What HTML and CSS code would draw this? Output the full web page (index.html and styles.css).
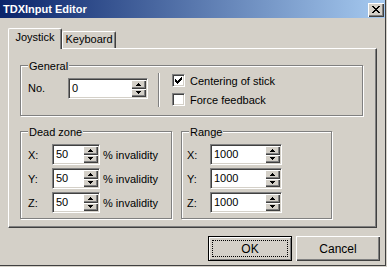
FILE: index.html
```html
<!DOCTYPE html>
<html lang="en">
<head>
    <meta charset="UTF-8">
    <title>TDXInput Editor</title>
    <link rel="stylesheet" href="styles.css">
</head>
<body>
    <div class="window">
        <div class="titlebar">
            <span class="title">TDXInput Editor</span>
            <span class="close">
                <svg width="8" height="7" viewBox="0 0 8 7" shape-rendering="crispEdges">
                    <path d="M0 0h2v1h-2zM6 0h2v1h-2zM1 1h2v1h-2zM5 1h2v1h-2zM2 2h4v1h-4zM3 3h2v1h-2zM2 4h4v1h-4zM1 5h2v1h-2zM5 5h2v1h-2zM0 6h2v1h-2zM6 6h2v1h-2z" fill="#000"/>
                </svg>
            </span>
        </div>
        <div class="client">
            <div class="tabs">
                <div class="tab active">Joystick</div>
                <div class="tab">Keyboard</div>
            </div>
            <div class="panel">
                <div class="group general">
                    <div class="legend">General</div>
                    <div class="general-row">
                        <span class="label no-label">No.</span>
                        <div class="spin w80">
                            <span class="value">0</span>
                            <div class="arrows">
                                <span class="arrow"><svg width="5" height="3" shape-rendering="crispEdges"><path d="M2 0h1v1h-1zM1 1h3v1h-3zM0 2h5v1h-5z"/></svg></span>
                                <span class="arrow"><svg width="5" height="3" shape-rendering="crispEdges"><path d="M0 0h5v1h-5zM1 1h3v1h-3zM2 2h1v1h-1z"/></svg></span>
                            </div>
                        </div>
                        <div class="separator"></div>
                        <div class="checks">
                            <div class="check">
                                <span class="box">
                                    <svg width="7" height="7" shape-rendering="crispEdges"><path d="M0 2h1v3h-1zM1 3h1v3h-1zM2 4h1v3h-1zM3 3h1v3h-1zM4 2h1v3h-1zM5 1h1v3h-1zM6 0h1v3h-1z"/></svg>
                                </span>
                                Centering of stick
                            </div>
                            <div class="check">
                                <span class="box"></span>
                                Force feedback
                            </div>
                        </div>
                    </div>
                </div>

                <div class="group-row">
                    <div class="group deadzone">
                        <div class="legend">Dead zone</div>
                        <div class="field">
                            <span class="label axis">X:</span>
                            <div class="spin w48">
                                <span class="value">50</span>
                                <div class="arrows">
                                    <span class="arrow"><svg width="5" height="3" shape-rendering="crispEdges"><path d="M2 0h1v1h-1zM1 1h3v1h-3zM0 2h5v1h-5z"/></svg></span>
                                    <span class="arrow"><svg width="5" height="3" shape-rendering="crispEdges"><path d="M0 0h5v1h-5zM1 1h3v1h-3zM2 2h1v1h-1z"/></svg></span>
                                </div>
                            </div>
                            <span class="suffix">% invalidity</span>
                        </div>
                        <div class="field">
                            <span class="label axis">Y:</span>
                            <div class="spin w48">
                                <span class="value">50</span>
                                <div class="arrows">
                                    <span class="arrow"><svg width="5" height="3" shape-rendering="crispEdges"><path d="M2 0h1v1h-1zM1 1h3v1h-3zM0 2h5v1h-5z"/></svg></span>
                                    <span class="arrow"><svg width="5" height="3" shape-rendering="crispEdges"><path d="M0 0h5v1h-5zM1 1h3v1h-3zM2 2h1v1h-1z"/></svg></span>
                                </div>
                            </div>
                            <span class="suffix">% invalidity</span>
                        </div>
                        <div class="field">
                            <span class="label axis">Z:</span>
                            <div class="spin w48">
                                <span class="value">50</span>
                                <div class="arrows">
                                    <span class="arrow"><svg width="5" height="3" shape-rendering="crispEdges"><path d="M2 0h1v1h-1zM1 1h3v1h-3zM0 2h5v1h-5z"/></svg></span>
                                    <span class="arrow"><svg width="5" height="3" shape-rendering="crispEdges"><path d="M0 0h5v1h-5zM1 1h3v1h-3zM2 2h1v1h-1z"/></svg></span>
                                </div>
                            </div>
                            <span class="suffix">% invalidity</span>
                        </div>
                    </div>

                    <div class="group range">
                        <div class="legend">Range</div>
                        <div class="field">
                            <span class="label axis">X:</span>
                            <div class="spin w72">
                                <span class="value">1000</span>
                                <div class="arrows">
                                    <span class="arrow"><svg width="5" height="3" shape-rendering="crispEdges"><path d="M2 0h1v1h-1zM1 1h3v1h-3zM0 2h5v1h-5z"/></svg></span>
                                    <span class="arrow"><svg width="5" height="3" shape-rendering="crispEdges"><path d="M0 0h5v1h-5zM1 1h3v1h-3zM2 2h1v1h-1z"/></svg></span>
                                </div>
                            </div>
                        </div>
                        <div class="field">
                            <span class="label axis">Y:</span>
                            <div class="spin w72">
                                <span class="value">1000</span>
                                <div class="arrows">
                                    <span class="arrow"><svg width="5" height="3" shape-rendering="crispEdges"><path d="M2 0h1v1h-1zM1 1h3v1h-3zM0 2h5v1h-5z"/></svg></span>
                                    <span class="arrow"><svg width="5" height="3" shape-rendering="crispEdges"><path d="M0 0h5v1h-5zM1 1h3v1h-3zM2 2h1v1h-1z"/></svg></span>
                                </div>
                            </div>
                        </div>
                        <div class="field">
                            <span class="label axis">Z:</span>
                            <div class="spin w72">
                                <span class="value">1000</span>
                                <div class="arrows">
                                    <span class="arrow"><svg width="5" height="3" shape-rendering="crispEdges"><path d="M2 0h1v1h-1zM1 1h3v1h-3zM0 2h5v1h-5z"/></svg></span>
                                    <span class="arrow"><svg width="5" height="3" shape-rendering="crispEdges"><path d="M0 0h5v1h-5zM1 1h3v1h-3zM2 2h1v1h-1z"/></svg></span>
                                </div>
                            </div>
                        </div>
                    </div>
                </div>
            </div>

            <div class="buttons">
                <div class="btn default"><span class="focus">OK</span></div>
                <div class="btn">Cancel</div>
            </div>
        </div>
    </div>
</body>
</html>
```

FILE: styles.css
```css
* {
    box-sizing: border-box;
}
body {
    margin: 0;
    background: #d4d0c8;
    font-family: "Liberation Sans", Arial, sans-serif;
    font-size: 11px;
    color: #000;
}
.window {
    width: 386px;
    height: 266px;
    border-right: 1px solid #404040;
    border-bottom: 1px solid #404040;
    overflow: hidden;
}
.titlebar {
    height: 18px;
    display: flex;
    align-items: center;
    justify-content: space-between;
    padding: 0 1px 0 3px;
    background: linear-gradient(to right, #0a246a, #a6caf0);
}
.title {
    color: #fff;
    font-weight: bold;
}
.close {
    width: 16px;
    height: 14px;
    margin-top: 1px;
    display: flex;
    align-items: center;
    justify-content: center;
    background: #d4d0c8;
    box-shadow: inset 1px 1px #fff, inset -1px -1px #404040, inset -2px -2px #808080;
}
.client {
    padding: 10px 5px 0 8px;
}

/* tabs */
.tabs {
    display: flex;
    align-items: flex-end;
    height: 20px;
}
.tab {
    width: 54px;
    height: 17px;
    padding-top: 1px;
    line-height: 13px;
    text-align: center;
    border-top: 1px solid #fff;
    border-left: 1px solid #fff;
    border-right: 1px solid #404040;
    border-radius: 2px 2px 0 0;
    box-shadow: inset -1px 0 #808080;
    background: #d4d0c8;
}
.tab.active {
    height: 21px;
    margin-bottom: -1px;
    padding-top: 2px;
    position: relative;
    z-index: 1;
}
.panel {
    width: 369px;
    height: 180px;
    padding: 16px 0 0 11px;
    border-top: 1px solid #fff;
    border-left: 1px solid #fff;
    border-right: 1px solid #404040;
    border-bottom: 1px solid #404040;
    box-shadow: inset -1px -1px #808080;
}

/* group boxes */
.group {
    border: 1px solid #808080;
    box-shadow: inset 1px 1px #fff, 1px 1px #fff;
}
.legend {
    width: fit-content;
    height: 13px;
    line-height: 13px;
    margin: -6px 0 0 7px;
    padding: 0 1px;
    background: #d4d0c8;
}
.general {
    width: 343px;
    height: 51px;
}
.general-row {
    display: flex;
    align-items: flex-start;
    padding-left: 7px;
}
.no-label {
    width: 40px;
    margin-top: 5px;
    line-height: 21px;
}
.general-row .spin {
    margin-top: 5px;
}
.separator {
    width: 2px;
    height: 34px;
    margin-left: 10px;
    border-left: 1px solid #808080;
    border-right: 1px solid #fff;
}
.checks {
    display: flex;
    flex-direction: column;
    gap: 6px;
    margin: 1px 0 0 12px;
}
.check {
    display: flex;
    align-items: center;
    gap: 5px;
    height: 13px;
}
.box {
    width: 13px;
    height: 13px;
    display: flex;
    align-items: center;
    justify-content: center;
    background: #fff;
    border-top: 1px solid #808080;
    border-left: 1px solid #808080;
    border-right: 1px solid #fff;
    border-bottom: 1px solid #fff;
    box-shadow: inset 1px 1px #404040, inset -1px -1px #d4d0c8;
}

.group-row {
    display: flex;
    gap: 9px;
    margin-top: 15px;
}
.deadzone {
    width: 152px;
    height: 88px;
}
.range {
    width: 151px;
    height: 88px;
}
.field {
    display: flex;
    align-items: center;
    height: 21px;
    margin-bottom: 3px;
    padding-left: 7px;
}
.group .legend + .field {
    margin-top: 5px;
}
.range .field {
    padding-left: 5px;
}
.axis {
    width: 24px;
}
.range .axis {
    width: 23px;
}
.suffix {
    margin-left: 3px;
}

/* spin edit */
.spin {
    display: flex;
    height: 21px;
    padding: 1px;
    background: #fff;
    border-top: 1px solid #808080;
    border-left: 1px solid #808080;
    border-right: 1px solid #fff;
    border-bottom: 1px solid #fff;
    box-shadow: inset 1px 1px #404040, inset -1px -1px #d4d0c8;
}
.w80 { width: 80px; }
.w48 { width: 48px; }
.w72 { width: 72px; }
.value {
    flex: 1;
    padding-left: 2px;
    line-height: 17px;
}
.arrows {
    width: 15px;
    display: flex;
    flex-direction: column;
}
.arrow {
    flex: 1;
    display: flex;
    align-items: center;
    justify-content: center;
    background: #d4d0c8;
    box-shadow: inset 1px 1px #fff, inset -1px -1px #404040, inset -2px -2px #808080;
}

/* dialog buttons */
.buttons {
    display: flex;
    justify-content: flex-end;
    gap: 4px;
    margin-top: 8px;
}
.btn {
    width: 84px;
    height: 25px;
    display: flex;
    align-items: center;
    justify-content: center;
    background: #d4d0c8;
    box-shadow: inset 1px 1px #fff, inset -1px -1px #404040, inset -2px -2px #808080;
    font-size: 12px;
}
.btn.default {
    padding: 3px;
    border: 1px solid #000;
    box-shadow: inset 1px 1px #fff, inset -1px -1px #808080;
}
.focus {
    width: 100%;
    height: 100%;
    display: flex;
    align-items: center;
    justify-content: center;
    border: 1px dotted #000;
}
```
